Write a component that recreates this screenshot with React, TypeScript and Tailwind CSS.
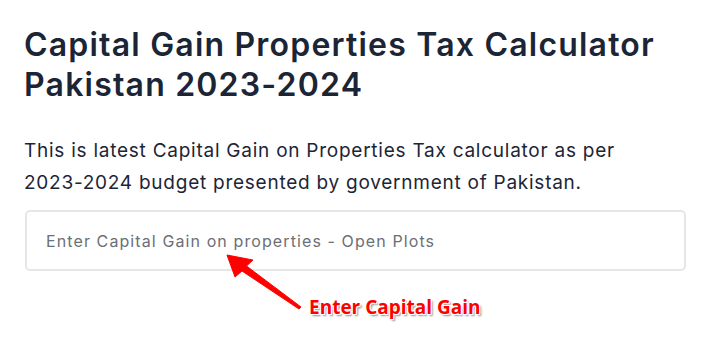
import React from "react";

export default function App() {
  return (
    <div className="relative w-[721px] h-[353px] bg-white overflow-hidden">
      <div className="px-[24px] pt-[25px]">
        <h1 className="font-['Inter',sans-serif] font-semibold text-[32px] leading-[40px] text-[#1c2536] tracking-[1.2px]">
          Capital Gain Properties Tax Calculator Pakistan 2023-2024
        </h1>
        <p className="mt-[30px] max-w-[630px] font-['Inter',sans-serif] text-[19px] leading-[32px] text-[#1c2536] tracking-[0.75px]">
          This is latest Capital Gain on Properties Tax calculator as per 2023-2024 budget presented by government of Pakistan.
        </p>
        <div className="mt-[11px] ml-[1px] w-[661px] h-[61px] border-2 border-[#e6e6e6] rounded-[5px] flex items-center pl-[19px]">
          <span className="font-['Inter',sans-serif] text-[16px] text-[#6b6f76] tracking-[1.1px]">
            Enter Capital Gain on properties - Open Plots
          </span>
        </div>
      </div>
      <svg className="absolute left-[220px] top-[248px]" width="90" height="64" viewBox="0 0 90 64">
        <path d="M7 7 L33 12 L26.5 18 L81 59 L79 61 L22 23 L15 29 Z" fill="#ff0000" stroke="#ff0000" strokeWidth="1" strokeLinejoin="round" />
      </svg>
      <div
        className="absolute left-[309px] top-[294px] font-['Open_Sans',sans-serif] font-bold text-[19px] leading-[26px] text-[#ff0000]"
        style={{ textShadow: "1px 1px 0 #fff, -1px -1px 0 #fff, 1px -1px 0 #fff, -1px 1px 0 #fff, 2px 2px 2px rgba(0,0,0,0.45)" }}
      >
        Enter Capital Gain
      </div>
    </div>
  );
}
